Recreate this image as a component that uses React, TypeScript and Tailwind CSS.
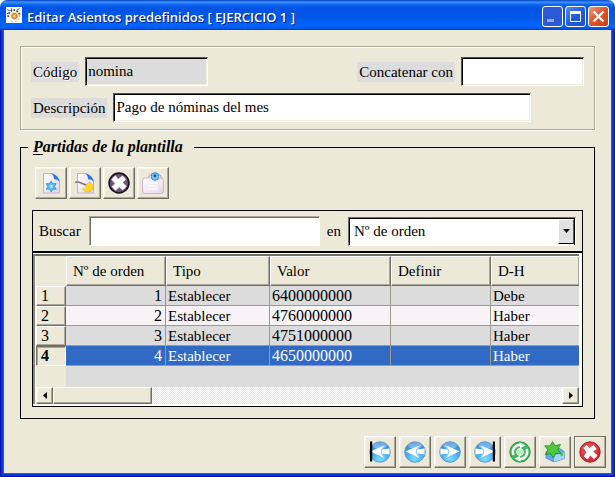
import { useState, type ReactNode } from 'react';

const raised =
  'flex h-8 w-8 items-center justify-center bg-[#ece9d8] border border-t-white border-l-white border-b-[#716f64] border-r-[#716f64] shadow-[inset_-1px_-1px_0_#aca899,inset_1px_1px_0_#f6f4ea]';
const sunken =
  'h-[29px] rounded-none border border-t-[#55534a] border-l-[#55534a] border-b-white border-r-white shadow-[inset_1px_1px_0_#000,inset_-1px_-1px_0_#f1efe2] px-[2px] text-[15px] outline-none';
const tag = 'flex h-5 items-center bg-[#dcdcdc] px-[2px]';

function ToolButton({ label, children, focused }: { label: string; children: ReactNode; focused?: boolean }) {
  return (
    <button type="button" aria-label={label} className={focused ? `${raised} outline outline-1 -outline-offset-1 outline-[#716f64]` : raised}>
      {children}
    </button>
  );
}

function Defs() {
  return (
    <svg width="0" height="0" className="absolute" aria-hidden="true">
      <defs>
        <radialGradient id="blueBall" cx="50%" cy="85%" r="85%">
          <stop offset="0" stopColor="#7fdcff" />
          <stop offset=".5" stopColor="#46adf3" />
          <stop offset="1" stopColor="#2f7fd6" />
        </radialGradient>
        <linearGradient id="sheet" x1="0" y1="0" x2="1" y2="1">
          <stop offset="0" stopColor="#ffffff" />
          <stop offset="1" stopColor="#e6d3ea" />
        </linearGradient>
        <radialGradient id="redBall" cx="45%" cy="40%" r="60%">
          <stop offset="0" stopColor="#f0696b" />
          <stop offset="1" stopColor="#cf1f2b" />
        </radialGradient>
      </defs>
    </svg>
  );
}

function Arrow({ flip, bar }: { flip?: boolean; bar?: boolean }) {
  return (
    <svg width="24" height="24" viewBox="0 0 24 24" aria-hidden="true">
      <g transform={flip ? 'translate(24 0) scale(-1 1)' : undefined}>
        <circle cx="12" cy="12" r="10.3" fill="url(#blueBall)" stroke="#5a8fc4" strokeWidth=".8" />
        <ellipse cx="12" cy="5.6" rx="7" ry="3.4" fill="#fff" opacity=".3" />
        <path d="M2.5 11.5 L9 8.6 L17.2 5.2 L14.4 9.6 L21.6 8.6 L21.6 14.4 L14.2 13.4 L17 18.2 L9 14.6 Z" fill="#fff" />
        <path d="M17.2 5.2 C14.8 7.5 13.4 9.8 13.2 11.5 C13.4 13.6 14.8 16 17 18.2" fill="none" stroke="#6fb8ee" strokeWidth=".9" />
        {bar && <rect x="2" y="1.5" width="2.2" height="20" fill="#000" />}
      </g>
    </svg>
  );
}

function Page() {
  return (
    <>
      <path d="M4.5 2.5 H14 L20.5 9 V22 H4.5 Z" fill="url(#sheet)" stroke="#c5a9cf" strokeWidth=".9" />
      <path d="M12 2.5 C16 3 20 5.5 20.6 11 C19 8.5 16.5 8 15 8.3 C15 5.5 14 3.5 12 2.5Z" fill="#2c76d8" />
    </>
  );
}

function NewIcon() {
  return (
    <svg width="24" height="24" viewBox="0 0 24 24" aria-hidden="true">
      <Page />
      <path d="M12.2 10 L13.9 12.7 L17.2 12.6 L15.6 15.4 L17.2 18.2 L13.9 18.2 L12.2 21 L10.5 18.2 L7.2 18.2 L8.8 15.4 L7.2 12.6 L10.5 12.7Z" fill="#58bdf2" stroke="#2b90d7" strokeWidth=".8" />
      <circle cx="12.2" cy="15.5" r="1.7" fill="#a5e3ff" />
    </svg>
  );
}

function EditIcon() {
  return (
    <svg width="24" height="24" viewBox="0 0 24 24" aria-hidden="true">
      <Page />
      <path d="M2 11.5 C5 9.5 8 12.5 13 14" fill="none" stroke="#777" strokeWidth="1.5" />
      <path d="M16.5 11.5 C21.5 12.5 21 21 15 21 C12.5 21 10.5 19.5 9.5 17.5 C12.5 18.5 14.5 17.5 13 13.5Z" fill="#ffd91f" stroke="#e0b010" strokeWidth=".6" />
    </svg>
  );
}

function DeleteIcon() {
  return (
    <svg width="24" height="24" viewBox="0 0 24 24" aria-hidden="true">
      <circle cx="12" cy="12" r="9.9" fill="#6b566e" stroke="#1d1320" strokeWidth="1.6" />
      <path d="M8.3 4.6 L11.2 8 L15.6 4.8 L18.9 8.6 L15.8 11.6 L19.6 15.4 L15.8 19 L12.4 16.2 L8.6 19.6 L4.8 15.8 L8 12.6 L4.4 8.6 Z" fill="#fff" stroke="#d8cbdb" strokeWidth=".5" />
    </svg>
  );
}

function BagIcon() {
  return (
    <svg width="24" height="24" viewBox="0 0 24 24" aria-hidden="true">
      <path d="M7.5 8 C7.5 .5 20.5 .5 20.5 8" fill="#fff" stroke="#8f8794" strokeWidth="1" />
      <rect x="1.5" y="7" width="21" height="15.5" rx="2.5" fill="url(#sheet)" stroke="#cdb5d5" />
      <circle cx="14" cy="5.5" r="3.8" fill="#78c8f6" stroke="#3388cf" />
      <circle cx="14" cy="5" r="1.4" fill="#17539e" />
      <path d="M7 12 H17 M7 15 H17 M7 18 H17" stroke="#fff" strokeWidth="1.2" />
    </svg>
  );
}

function RefreshIcon() {
  return (
    <svg width="24" height="24" viewBox="0 0 24 24" aria-hidden="true">
      <circle cx="12" cy="12" r="10.2" fill="#3dbb58" stroke="#23903d" strokeWidth=".9" />
      <path d="M5.5 15 A7 7 0 0 1 12.5 5" fill="none" stroke="#fff" strokeWidth="2.4" />
      <path d="M18.5 9 A7 7 0 0 1 11.5 19" fill="none" stroke="#fff" strokeWidth="2.4" />
      <path d="M11.5 2.3 L17.5 5.6 L12 8.2Z M12.5 21.7 L6.5 18.4 L12 15.8Z" fill="#fff" />
      <circle cx="12" cy="12" r="3.4" fill="#b5edbb" stroke="#fff" strokeWidth="1" />
    </svg>
  );
}

function SaveNewIcon() {
  return (
    <svg width="24" height="24" viewBox="0 0 24 24" aria-hidden="true">
      <path d="M3 12 L16 8 L21.5 12 V18.5 L11 22 L3 18Z" fill="#5aaeea" stroke="#4a86bc" strokeWidth=".8" />
      <path d="M11 15.5 L21.5 12 V18.5 L11 22Z" fill="#a0d6f8" />
      <circle cx="18.8" cy="14.6" r="1.5" fill="#39ce45" />
      <path d="M9.5 1.5 L11.9 5.6 L17.5 4.5 L14.7 9.4 L18 13.5 L12.6 13.3 L10.5 18 L7.6 13.7 L2.3 14.6 L4.8 10 L1.8 5.7 L7 6Z" fill="#4ec93c" stroke="#218727" strokeWidth=".8" />
    </svg>
  );
}

function CancelIcon() {
  return (
    <svg width="24" height="24" viewBox="0 0 24 24" aria-hidden="true">
      <circle cx="12" cy="12" r="10.2" fill="url(#redBall)" stroke="#a81822" strokeWidth=".9" />
      <path d="M5.2 7.8 L8.8 5 L11.2 8.2 L15.6 5 L18.8 9 L15.2 11.6 L19.6 15.4 L16 19.2 L12.4 15.6 L9.4 19.4 L5.6 16.2 L8.6 12.2Z" fill="#fff" />
    </svg>
  );
}

function AppIcon() {
  return (
    <svg width="16" height="16" viewBox="0 0 16 16" aria-hidden="true">
      <rect width="16" height="16" fill="#fff" />
      <path d="M2.5 10 A5.6 5.6 0 0 1 13.5 7.5" fill="none" stroke="#3b4852" strokeWidth="1.8" strokeDasharray="1.8 1.3" />
      <path d="M1 2.5 L4 4 M5 1 L6 3 M11 3 L14 1.5 M1 6.5 H3" stroke="#5c7482" />
      <path d="M13.5 8 A5.6 5.6 0 0 1 4 13" fill="none" stroke="#9db6c6" strokeDasharray="2 1.5" />
      <circle cx="8.5" cy="9" r="4.2" fill="#f6dfb8" />
      <circle cx="8.5" cy="9" r="2.7" fill="#f1a034" stroke="#c97f20" />
      <circle cx="8.5" cy="9" r="1" fill="#ffe9b5" />
    </svg>
  );
}

const rows = [
  { n: 1, tipo: 'Establecer', valor: '6400000000', definir: '', dh: 'Debe' },
  { n: 2, tipo: 'Establecer', valor: '4760000000', definir: '', dh: 'Haber' },
  { n: 3, tipo: 'Establecer', valor: '4751000000', definir: '', dh: 'Haber' },
  { n: 4, tipo: 'Establecer', valor: '4650000000', definir: '', dh: 'Haber' },
];

const headCell =
  'h-[30px] border border-t-white border-l-white border-b-[#716f64] border-r-[#716f64] shadow-[inset_-1px_-1px_0_#aca899] bg-[#ece9d8] px-[6px] text-left font-normal';
const captionButton = 'flex h-[21px] w-[21px] items-center justify-center rounded-[3px] border border-white';

function TitleBar() {
  return (
    <header className="flex h-[30px] items-center rounded-t-[7px] bg-[linear-gradient(180deg,#0842c4_0%,#3c92ff_7%,#0a62ee_16%,#0054e3_28%,#0057e8_55%,#0066ff_85%,#005bef_93%,#003fc8_100%)] pr-[6px] pl-[6px]">
      <AppIcon />
      <h1 className="ml-[5px] flex-1 pt-1 font-['Open_Sans','Noto_Sans',sans-serif] text-[13px] font-semibold whitespace-nowrap text-white [text-shadow:1px_1px_0_#0a1883]">
        Editar Asientos predefinidos [ EJERCICIO 1 ]
      </h1>
      <div className="flex gap-[2px] pt-[3px]">
        <button type="button" aria-label="Minimizar" className={`${captionButton} border-[#8aa5ec] bg-[#2c59d8]`}>
          <svg width="19" height="19" aria-hidden="true"><rect x="4" y="12" width="7" height="3" fill="#8fa9ee" /></svg>
        </button>
        <button type="button" aria-label="Maximizar" className={`${captionButton} bg-[linear-gradient(135deg,#5b8df5,#2559dc_50%,#1c4fd0)]`}>
          <svg width="19" height="19" aria-hidden="true"><path d="M4.5 4.5 H14.5 V14.5 H4.5Z" fill="none" stroke="#fff" /><path d="M4 5.5 H15" stroke="#fff" strokeWidth="3" /></svg>
        </button>
        <button type="button" aria-label="Cerrar" className={`${captionButton} bg-[linear-gradient(135deg,#f0997f,#e0512d_50%,#cc3f12)]`}>
          <svg width="19" height="19" aria-hidden="true"><path d="M4.5 4.5 L14.5 14.5 M14.5 4.5 L4.5 14.5" stroke="#fff" strokeWidth="2.4" /></svg>
        </button>
      </div>
    </header>
  );
}

export default function App() {
  const [selected, setSelected] = useState(4);
  return (
    <div className="flex min-h-screen flex-col bg-white font-['Liberation_Serif','Times_New_Roman',serif] text-[15px] leading-5 text-black">
      <Defs />
      <TitleBar />
      <div className="flex flex-1 flex-col border-x border-b border-[#0016a8]">
        <div className="flex flex-1 flex-col border-x-2 border-b-2 border-[#0836dc]">
          <main className="flex-1 border-x border-b border-[#1463ee] bg-[#ece9d8]">
            <div className="px-4 pt-4">
              <section className="border border-[#aca899] px-[10px] pt-[10px] pb-[7px] shadow-[1px_1px_0_#fff,inset_1px_1px_0_#fff]">
                <div className="flex items-center">
                  <label htmlFor="codigo" className={`${tag} mr-[6px] [text-shadow:1px_1px_0_#fff]`}>Código</label>
                  <input id="codigo" readOnly defaultValue="nomina" className={`${sunken} w-[123px] bg-[#dcdcdc]`} />
                  <label htmlFor="concatenar" className={`${tag} mr-[6px] ml-auto`}>Concatenar con</label>
                  <input id="concatenar" className={`${sunken} w-[123px] bg-white`} />
                </div>
                <div className="mt-[7px] flex items-center pr-[53px]">
                  <label htmlFor="descripcion" className={`${tag} mr-[6px]`}>Descripción</label>
                  <input id="descripcion" defaultValue="Pago de nóminas del mes" className={`${sunken} min-w-0 flex-1 bg-white`} />
                </div>
              </section>

              <fieldset className="mt-[7px] min-w-0 border border-black px-[11px] pb-[11px]">
                <legend className="-ml-1 pr-[11px] pl-[5px] text-base leading-5 font-bold italic">
                  <span className="underline underline-offset-2">P</span>artidas de la plantilla
                </legend>
                <div className="flex gap-[2px] pt-[10px] pl-[3px]">
                  <ToolButton label="Nuevo"><NewIcon /></ToolButton>
                  <ToolButton label="Editar"><EditIcon /></ToolButton>
                  <ToolButton label="Borrar"><DeleteIcon /></ToolButton>
                  <ToolButton label="Ver"><BagIcon /></ToolButton>
                </div>

                <div className="mt-[11px] flex items-center border border-black py-[5px] pr-[6px] pl-[6px]">
                  <label htmlFor="buscar" className="mr-2">Buscar</label>
                  <input
                    id="buscar"
                    className="h-[30px] min-w-0 flex-1 border border-t-[#aca899] border-r-white border-b-white border-l-[#aca899] bg-white px-1 shadow-[inset_1px_1px_0_#716f64] outline-none"
                  />
                  <label htmlFor="campo" className="mx-[7px]">en</label>
                  <div className="relative w-[228px]">
                    <select
                      id="campo"
                      className="block h-[29px] w-full appearance-none rounded-none border border-t-[#716f64] border-r-white border-b-white border-l-[#716f64] bg-white px-[5px] text-[15px] shadow-[inset_1px_1px_0_#000,inset_-1px_0_0_#000] outline-none"
                    >
                      <option>Nº de orden</option>
                      <option>Tipo</option>
                      <option>Valor</option>
                      <option>Definir</option>
                      <option>D-H</option>
                    </select>
                    <span className="pointer-events-none absolute top-[2px] right-[2px] flex h-[25px] w-4 items-center justify-center border border-t-white border-r-[#55534a] border-b-black border-l-white bg-[#e2e2e2]">
                      <svg width="7" height="4" aria-hidden="true"><path d="M0 0 H7 L3.5 4Z" /></svg>
                    </span>
                  </div>
                </div>

                <div className="border border-black bg-[#fffff4] pt-px pr-[3px] pb-[2px]">
                  <div className="border-t-2 border-l-2 border-t-[#716f64] border-l-[#8a877a] pl-px">
                    <div className="overflow-hidden bg-[#dcdcdc]">
                      <table className="w-full table-fixed border-separate border-spacing-0">
                        <colgroup>
                          <col className="w-[30px]" />
                          <col className="w-[100px]" />
                          <col className="w-[104px]" />
                          <col className="w-[121px]" />
                          <col className="w-[100px]" />
                          <col />
                        </colgroup>
                        <thead>
                          <tr>
                            <td className="bg-[#ece9d8]" />
                            <th scope="col" className={headCell}>Nº de orden</th>
                            <th scope="col" className={headCell}>Tipo</th>
                            <th scope="col" className={headCell}>Valor</th>
                            <th scope="col" className={headCell}>Definir</th>
                            <th scope="col" className={`${headCell} border-r-0`}>D-H</th>
                          </tr>
                        </thead>
                        <tbody>
                          {rows.map((row) => {
                            const active = row.n === selected;
                            const tone = active ? 'bg-[#316ac5] text-white' : row.n % 2 ? 'bg-[#dcdcdc]' : 'bg-[#f7f3f7]';
                            const cell = `${tone} h-5 border-b border-r border-[#9d9a8d] p-0 px-[2px] leading-[18px]`;
                            return (
                              <tr key={row.n} onClick={() => setSelected(row.n)}>
                                <th
                                  scope="row"
                                  className={
                                    active
                                      ? 'h-5 border border-t-[#716f64] border-r-white border-b-white border-l-[#716f64] bg-[#ece9d8] px-1 py-0 text-left text-base leading-[18px] font-bold shadow-[inset_1px_1px_0_#aca899]'
                                      : 'h-5 border border-t-white border-r-[#716f64] border-b-[#716f64] border-l-white bg-[#ece9d8] px-1 py-0 text-left text-base leading-[18px] font-normal shadow-[inset_-1px_-1px_0_#aca899]'
                                  }
                                >
                                  {row.n}
                                </th>
                                <td className={`${cell} pt-px pr-[3px] text-right text-base`}>{row.n}</td>
                                <td className={cell}>{row.tipo}</td>
                                <td className={`${cell} text-base`}>{row.valor}</td>
                                <td className={cell}>{row.definir}</td>
                                <td className={`${cell} border-r-0`}>{row.dh}</td>
                              </tr>
                            );
                          })}
                        </tbody>
                      </table>
                      <div className="flex h-[21px]"><div className="w-[30px] bg-[#ece9d8]" /></div>
                      <div className="flex h-[17px] justify-between bg-[repeating-conic-gradient(#ffffff_0_25%,#ece9d8_0_50%)] bg-[length:2px_2px]">
                        <div className="flex">
                          <button type="button" aria-label="Desplazar a la izquierda" className={`${raised} h-[17px] w-[17px]`}>
                            <svg width="4" height="7" aria-hidden="true"><path d="M4 0 V7 L0 3.5Z" /></svg>
                          </button>
                          <div className="h-[17px] w-[99px] border border-t-white border-r-[#716f64] border-b-[#716f64] border-l-white bg-[#ece9d8] shadow-[inset_-1px_-1px_0_#aca899]" />
                        </div>
                        <button type="button" aria-label="Desplazar a la derecha" className={`${raised} h-[17px] w-[17px]`}>
                          <svg width="4" height="7" aria-hidden="true"><path d="M0 0 V7 L4 3.5Z" /></svg>
                        </button>
                      </div>
                    </div>
                  </div>
                </div>
              </fieldset>
            </div>

            <nav className="mt-[17px] flex justify-end gap-[3px] pr-[5px] pb-[5px]">
              <ToolButton label="Primero"><Arrow bar /></ToolButton>
              <ToolButton label="Anterior"><Arrow /></ToolButton>
              <ToolButton label="Siguiente"><Arrow flip /></ToolButton>
              <ToolButton label="Último"><Arrow flip bar /></ToolButton>
              <ToolButton label="Aceptar"><RefreshIcon /></ToolButton>
              <ToolButton label="Aceptar y nuevo"><SaveNewIcon /></ToolButton>
              <ToolButton label="Cancelar" focused><CancelIcon /></ToolButton>
            </nav>
          </main>
        </div>
      </div>
    </div>
  );
}
